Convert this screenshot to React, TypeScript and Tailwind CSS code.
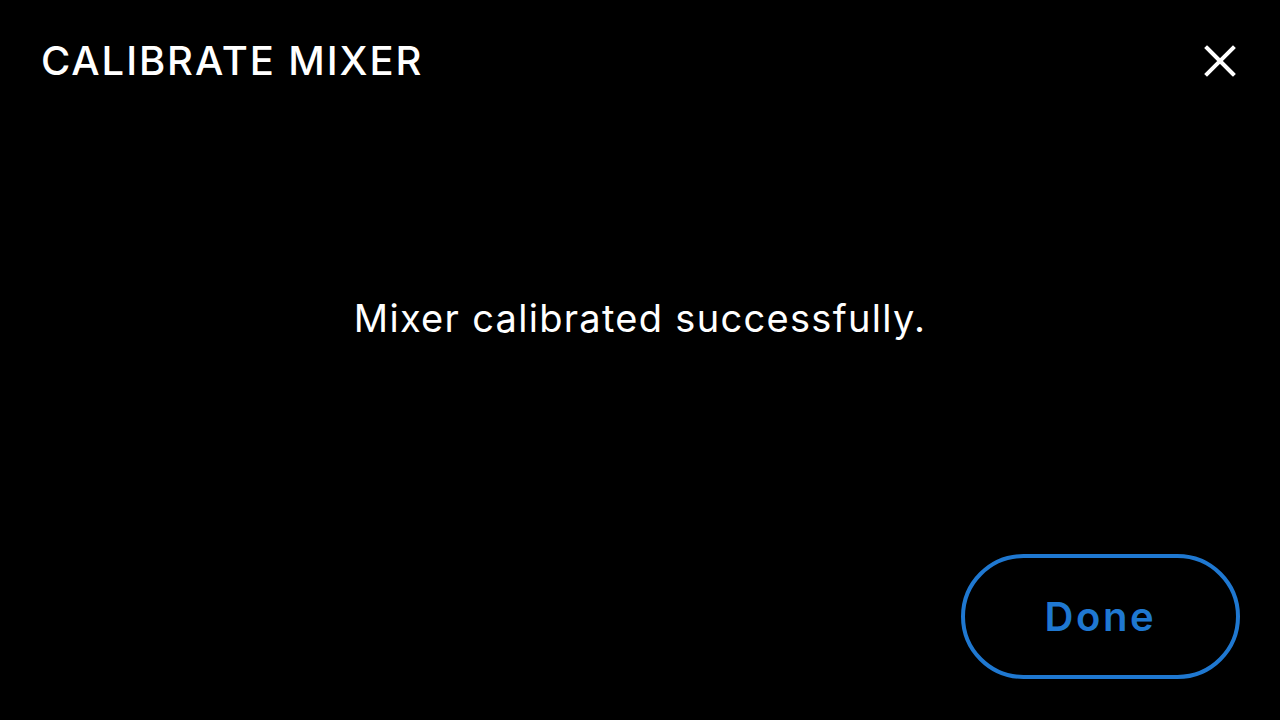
export default function App() {
  return (
    <div
      className="w-[1280px] h-[720px] bg-black text-white flex flex-col overflow-hidden"
      style={{ fontFamily: "Inter, 'Noto Sans', sans-serif" }}
    >
      <header className="flex items-center justify-between pl-[41px] pr-[44px] pt-[37px]">
        <h1 className="text-[40px] leading-[48px] font-medium tracking-[1.9px]">CALIBRATE MIXER</h1>
        <button aria-label="Close" className="w-[32px] h-[32px] flex items-center justify-center">
          <svg width="32" height="32" viewBox="0 0 32 32" fill="none" stroke="white" strokeWidth="4" strokeLinecap="square">
            <path d="M3 3 L29 29 M29 3 L3 29" />
          </svg>
        </button>
      </header>
      <main className="flex-1 flex items-center justify-center pb-[4px]">
        <p className="text-[38px] leading-[46px] tracking-[1.3px]">Mixer calibrated successfully.</p>
      </main>
      <footer className="flex justify-end pr-[40px] pb-[41px]">
        <button className="w-[279px] h-[125px] rounded-full border-4 border-[#1f78d1] text-[#1f78d1] text-[40px] font-semibold tracking-[2.6px]">
          Done
        </button>
      </footer>
    </div>
  );
}
